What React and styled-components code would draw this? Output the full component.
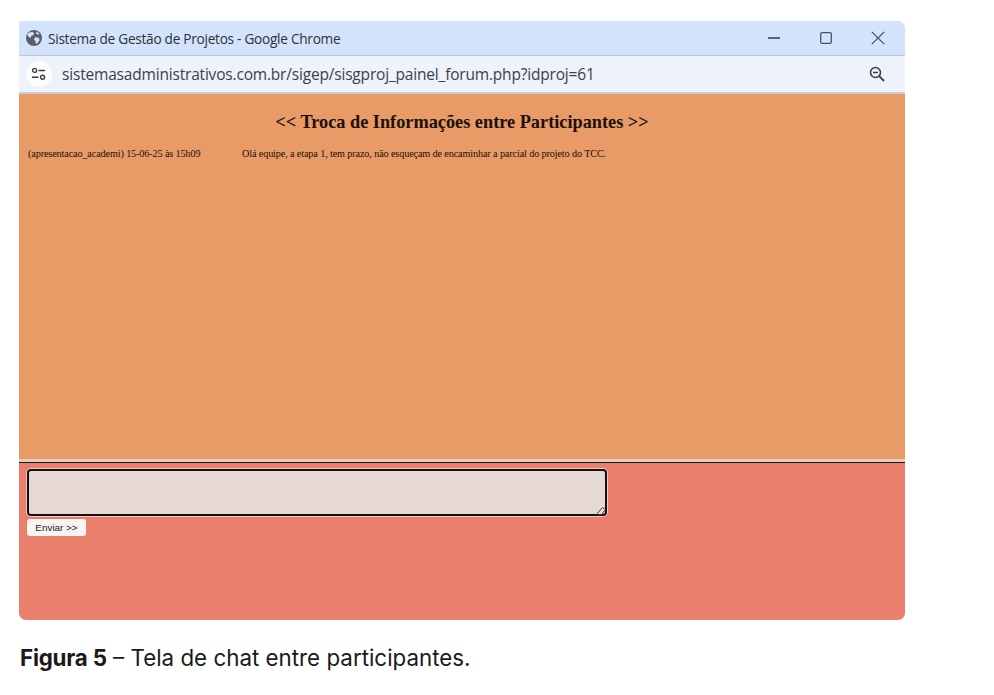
import React from "react";
import styled, { createGlobalStyle } from "styled-components";

const Global = createGlobalStyle`
  html, body { margin: 0; padding: 0; background: #fff; }
  body { width: 994px; height: 695px; overflow: hidden; }
`;

const Page = styled.div`
  width: 994px;
  height: 695px;
  padding: 21px 0 0 19px;
  box-sizing: border-box;
  display: flex;
  flex-direction: column;
  align-items: flex-start;
`;

const Window = styled.div`
  width: 886px;
  height: 599px;
  display: flex;
  flex-direction: column;
  border-radius: 2px 7px 7px 7px;
  overflow: hidden;
  font-family: "Open Sans", "Noto Sans", sans-serif;
`;

const TitleBar = styled.div`
  height: 35px;
  flex: none;
  box-sizing: border-box;
  padding: 0 19px 0 7px;
  background: #d3e3fb;
  border-bottom: 1px solid #b9c8dc;
  display: flex;
  align-items: center;
  gap: 6px;
  color: #2c3138;
  font-size: 13.65px;
  letter-spacing: -0.02em;
`;

const TitleText = styled.span`
  flex: 1;
`;

const Controls = styled.div`
  display: flex;
  align-items: center;
  gap: 36px;
`;

const AddressBar = styled.div`
  height: 38px;
  flex: none;
  box-sizing: border-box;
  padding: 0 20px 0 7px;
  background: #edf2fb;
  border-bottom: 2px solid #c9ccd0;
  display: flex;
  align-items: center;
  gap: 10px;
  color: #3c4148;
  font-size: 15.5px;
  letter-spacing: -0.012em;
`;

const SiteBadge = styled.div`
  width: 26px;
  height: 26px;
  border-radius: 50%;
  background: #fdfdfe;
  display: flex;
  align-items: center;
  justify-content: center;
  flex: none;
`;

const Url = styled.span`
  flex: 1;
`;

const Forum = styled.main`
  height: 365px;
  flex: none;
  box-sizing: border-box;
  background: #e89a67;
  padding-top: 18px;
  font-family: "Liberation Serif", serif;
  color: #20100a;
`;

const Heading = styled.h2`
  margin: 0;
  font-size: 18.3px;
  line-height: 21px;
  font-weight: 700;
  text-align: center;
`;

const Message = styled.div`
  margin-top: 14px;
  padding-left: 9px;
  display: flex;
  font-size: 10.2px;
  line-height: 14px;
  letter-spacing: -0.012em;
`;

const Author = styled.span`
  width: 214px;
  flex: none;
`;

const Divider = styled.div`
  height: 3px;
  flex: none;
  background: #ddd0c9;
  border-bottom: 1px solid #1d1210;
`;

const Composer = styled.section`
  flex: 1;
  background: #ea7f6c;
  padding: 6px 0 0 8px;
  display: flex;
  flex-direction: column;
  align-items: flex-start;
  gap: 3px;
`;

const BoxFrame = styled.div`
  position: relative;
  width: 580px;
  height: 47px;
`;

const Box = styled.textarea`
  width: 100%;
  height: 100%;
  box-sizing: border-box;
  margin: 0;
  background: #e6d8d5;
  border: 2px solid #141010;
  border-radius: 4px;
  box-shadow: 0 0 0 1px #f3c9bf;
  outline: none;
  display: block;
  resize: none;
`;

const Grip = styled.svg`
  position: absolute;
  right: 0;
  bottom: 0;
`;

const Send = styled.button`
  width: 59px;
  height: 17px;
  padding: 0;
  background: #f7f4f2;
  border: 0;
  border-radius: 3px;
  color: #222;
  font-family: "Liberation Sans", sans-serif;
  font-size: 9.9px;
  text-align: center;
`;

const Caption = styled.p`
  margin: 25px 0 0 1px;
  font-family: "Inter", "Noto Sans", sans-serif;
  font-size: 22.35px;
  line-height: 26px;
  color: #1a1a1a;
  white-space: nowrap;
`;

const Strong = styled.strong`
  font-weight: 700;
  letter-spacing: -0.01em;
`;

const Globe = () => (
  <svg width="16" height="16" viewBox="0 0 16 16">
    <circle cx="8" cy="8" r="8" fill="#5a6069" />
    <path d="M3 2.6 6.6 2l1.7 1.4-1.6 2.2-1.6.3-.3 2-2.6-1.4-.9-2zM9 7.3l3.7.4 1 2.2-2.4 3.4-1.6.5-.2-2.6L8 9.6zM10.4 1.4l3 2.2-1.3 1.2-1.9-1.3z" fill="#d3e3fb" />
  </svg>
);

const Minimize = () => (
  <svg width="16" height="16" viewBox="0 0 16 16">
    <path d="M2 8h12" stroke="#2f3947" strokeWidth="1.6" />
  </svg>
);

const Maximize = () => (
  <svg width="16" height="16" viewBox="0 0 16 16">
    <rect x="2.7" y="2.7" width="10.6" height="10.6" rx="1.4" fill="none" stroke="#48525f" strokeWidth="1.3" />
  </svg>
);

const Close = () => (
  <svg width="16" height="16" viewBox="0 0 16 16">
    <path d="M1.8 1.8l12.4 12.4M14.2 1.8 1.8 14.2" stroke="#3e4650" strokeWidth="1.1" />
  </svg>
);

const SiteControls = () => (
  <svg width="16" height="14" viewBox="0 0 16 14">
    <circle cx="3.6" cy="3.4" r="2" fill="none" stroke="#3c4148" strokeWidth="1.4" />
    <path d="M7.5 3.4h6.5M1 10.2h6.5" stroke="#3c4148" strokeWidth="1.5" />
    <circle cx="11.6" cy="10.2" r="2" fill="none" stroke="#3c4148" strokeWidth="1.4" />
  </svg>
);

const ZoomOut = () => (
  <svg width="16" height="16" viewBox="0 0 16 16">
    <circle cx="6.5" cy="6.5" r="5" fill="none" stroke="#3c4148" strokeWidth="1.6" />
    <path d="M4 6.5h5" stroke="#3c4148" strokeWidth="1.5" />
    <path d="M10.2 10.2 15 15" stroke="#3c4148" strokeWidth="1.9" />
  </svg>
);

export default function App() {
  return (
    <Page>
      <Global />
      <Window>
        <TitleBar>
          <Globe />
          <TitleText>Sistema de Gestão de Projetos - Google Chrome</TitleText>
          <Controls>
            <Minimize />
            <Maximize />
            <Close />
          </Controls>
        </TitleBar>
        <AddressBar>
          <SiteBadge>
            <SiteControls />
          </SiteBadge>
          <Url>sistemasadministrativos.com.br/sigep/sisgproj_painel_forum.php?idproj=61</Url>
          <ZoomOut />
        </AddressBar>
        <Forum>
          <Heading>&lt;&lt; Troca de Informações entre Participantes &gt;&gt;</Heading>
          <Message>
            <Author>(apresentacao_academi) 15-06-25 às 15h09</Author>
            <span>Olá equipe, a etapa 1, tem prazo, não esqueçam de encaminhar a parcial do projeto do TCC.</span>
          </Message>
        </Forum>
        <Divider />
        <Composer>
          <BoxFrame>
            <Box aria-label="Mensagem" />
            <Grip width="12" height="12" viewBox="0 0 12 12">
              <path d="M1.5 10.5 7.5 3.5l3 2-4 5z" fill="#efe6e3" stroke="#3a3432" strokeWidth="1" />
            </Grip>
          </BoxFrame>
          <Send type="button">Enviar &gt;&gt;</Send>
        </Composer>
      </Window>
      <Caption>
        <Strong>Figura 5</Strong> – Tela de chat entre participantes.
      </Caption>
    </Page>
  );
}
